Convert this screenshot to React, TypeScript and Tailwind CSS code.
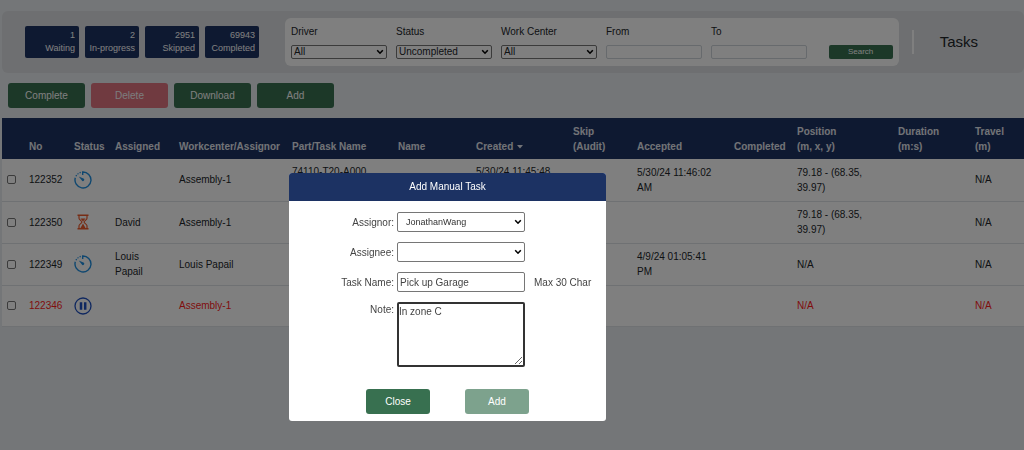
import React from "react";
import clsx from "clsx";

type Status = "running" | "waiting" | "paused";

type Task = {
  no: string;
  status: Status;
  assigned?: string;
  workcenter: string;
  part?: string;
  created?: string;
  accepted?: string;
  position: string;
  travel: string;
  late?: boolean;
};

const stats = [
  { count: 1, label: "Waiting" },
  { count: 2, label: "In-progress" },
  { count: 2951, label: "Skipped" },
  { count: 69943, label: "Completed" },
];

const tasks: Task[] = [
  {
    no: "122352",
    status: "running",
    workcenter: "Assembly-1",
    part: "74110-T20-A000",
    created: "5/30/24 11:45:48",
    accepted: "5/30/24 11:46:02 AM",
    position: "79.18 - (68.35, 39.97)",
    travel: "N/A",
  },
  {
    no: "122350",
    status: "waiting",
    assigned: "David",
    workcenter: "Assembly-1",
    position: "79.18 - (68.35, 39.97)",
    travel: "N/A",
  },
  {
    no: "122349",
    status: "running",
    assigned: "Louis Papail",
    workcenter: "Louis Papail",
    accepted: "4/9/24 01:05:41 PM",
    position: "N/A",
    travel: "N/A",
  },
  {
    no: "122346",
    status: "paused",
    workcenter: "Assembly-1",
    position: "N/A",
    travel: "N/A",
    late: true,
  },
];

const columns = [
  { title: "", width: "w-[22px]" },
  { title: "No", width: "w-[45px]" },
  { title: "Status", width: "w-[41px]" },
  { title: "Assigned", width: "w-[64px]" },
  { title: "Workcenter/Assignor", width: "w-[113px]" },
  { title: "Part/Task Name", width: "w-[106px]" },
  { title: "Name", width: "w-[78px]" },
  { title: "Created", width: "w-[97px]", sorted: true },
  { title: "Skip", unit: "(Audit)", width: "w-[64px]" },
  { title: "Accepted", width: "w-[97px]" },
  { title: "Completed", width: "w-[63px]" },
  { title: "Position", unit: "(m, x, y)", width: "w-[101px]" },
  { title: "Duration", unit: "(m:s)", width: "w-[77px]" },
  { title: "Travel", unit: "(m)", width: "w-[54px]" },
];

const StatusIcon = ({ status }: { status: Status }) => {
  if (status === "waiting") {
    return (
      <svg viewBox="0 0 18 18" className="size-[18px]" fill="none" stroke="#ee5a2a" strokeWidth="1.2">
        <path d="M3.500 2.200h11M3.500 15.800h11" strokeWidth="1.500" />
        <path d="M5 2.500v2.700c0 1.600 2.900 2.600 2.900 3.800S5 11.200 5 12.800v2.700M13 2.500v2.700c0 1.600-2.900 2.600-2.900 3.800s2.900 2.200 2.900 3.800v2.700" />
        <path d="M6.500 5.400h5L9 8.400zM9 10.400l2.500 4.600h-5z" fill="#ee5a2a" stroke="none" />
      </svg>
    );
  }
  if (status === "paused") {
    return (
      <svg viewBox="0 0 18 18" className="size-[18px]" fill="none" stroke="#1f50c0">
        <circle cx="9" cy="9" r="8" strokeWidth="1.300" />
        <path d="M7 5.200v7.600M11.200 5.200v7.600" strokeWidth="2.500" />
      </svg>
    );
  }
  return (
    <svg viewBox="0 0 18 18" className="size-[18px]" fill="none" stroke="#1f8fe0">
      <path d="M8.700 4V1a8 8 0 1 1-7.400 5.800" strokeWidth="1.400" />
      <path d="M2 5.200A8 8 0 0 1 7 1.300" strokeWidth="1.300" strokeDasharray="1.200 1.300" />
      <path d="M4.700 5.600l5.300 2.200a1.500 1.500 0 0 1-1.700 2.300z" fill="#1f8fe0" stroke="none" />
    </svg>
  );
};

type SelectProps = {
  id: string;
  options: string[];
  className?: string;
};

const Select = ({ id, options, className }: SelectProps) => (
  <div className="relative">
    <select
      id={id}
      className={clsx(
        "block w-full appearance-none rounded-[2px] border border-[#767676] bg-white pr-4",
        className,
      )}
    >
      {options.map((option) => (
        <option key={option}>{option}</option>
      ))}
    </select>
    <svg
      viewBox="0 0 8 6"
      className="pointer-events-none absolute top-1/2 right-[3px] h-[6px] w-[8px] -translate-y-1/2"
      fill="none"
      stroke="#000"
      strokeWidth="1.600"
    >
      <path d="M1.200 1.300L4 4.200l2.800-2.900" />
    </svg>
  </div>
);

const FilterField = ({ id, label, children }: { id: string; label: string; children: React.ReactNode }) => (
  <div className="flex w-24 flex-col gap-[6px]">
    <label htmlFor={id}>{label}</label>
    {children}
  </div>
);

const Header = () => (
  <header className="flex items-center rounded-md bg-[#dcdfe2] py-[7px] pr-[46px] pl-[23px]">
    <div className="flex gap-[6px] text-[9px] leading-[13px] text-white">
      {stats.map((stat) => (
        <div key={stat.label} className="w-[54px] rounded-[2px] bg-[#1c3263] py-[3px] pr-1 text-right">
          <div>{stat.count}</div>
          <div>{stat.label}</div>
        </div>
      ))}
    </div>
    <form className="ml-[26px] flex flex-1 items-end gap-[9px] rounded-md bg-white px-[6px] pt-[6px] pb-[7px]">
      <FilterField id="driver" label="Driver">
        <Select id="driver" options={["All"]} className="h-[14px] pl-[2px] leading-[12px]" />
      </FilterField>
      <FilterField id="status" label="Status">
        <Select id="status" options={["Uncompleted"]} className="h-[14px] pl-[2px] leading-[12px]" />
      </FilterField>
      <FilterField id="center" label="Work Center">
        <Select id="center" options={["All"]} className="h-[14px] pl-[2px] leading-[12px]" />
      </FilterField>
      <FilterField id="from" label="From">
        <input id="from" type="text" className="h-[14px] rounded-[2px] border border-[#ced4da] px-1" />
      </FilterField>
      <FilterField id="to" label="To">
        <input id="to" type="text" className="h-[14px] rounded-[2px] border border-[#ced4da] px-1" />
      </FilterField>
      <button type="button" className="ml-auto h-[14px] w-16 rounded-[2px] bg-[#387050] text-[8px] leading-[14px] text-white">
        Search
      </button>
    </form>
    <div className="ml-[13px] h-6 w-[2px] bg-white" />
    <h1 className="ml-[26px] text-[15px] leading-5">Tasks</h1>
  </header>
);

type ActionButtonProps = {
  children: string;
  className: string;
  disabled?: boolean;
};

const ActionButton = ({ children, className, disabled }: ActionButtonProps) => (
  <button
    type="button"
    disabled={disabled}
    className={clsx("rounded-[3px] py-[5px] text-white disabled:opacity-65", className)}
  >
    {children}
  </button>
);

const TaskTable = () => (
  <table className="w-full table-fixed border-collapse bg-white text-left">
    <thead className="bg-[#1c3263] text-[#e4e7ee]">
      <tr className="h-[41px]">
        {columns.map((column, index) => (
          <th key={index} className={clsx("px-[5px] pb-[5px] align-bottom font-bold", column.width)}>
            {column.title}
            {column.unit && <div>{column.unit}</div>}
            {column.sorted && (
              <svg viewBox="0 0 6 4" className="ml-1 inline h-1 w-[6px]" fill="currentColor">
                <path d="M0 0h6L3 3.500z" />
              </svg>
            )}
          </th>
        ))}
      </tr>
    </thead>
    <tbody>
      {tasks.map((task) => (
        <tr
          key={task.no}
          className={clsx("h-[42px] border-b border-[#dee2e6] *:px-[5px] last:h-[41px]", task.late && "text-[#ff1a1a]")}
        >
          <td>
            <input
              type="checkbox"
              aria-label={task.no}
              className="block size-[9px] appearance-none rounded-[2px] border border-[#767676] checked:bg-[#1c3263]"
            />
          </td>
          <td>{task.no}</td>
          <td>
            <StatusIcon status={task.status} />
          </td>
          <td>{task.assigned}</td>
          <td>{task.workcenter}</td>
          <td className="pt-[5px] align-top">{task.part}</td>
          <td />
          <td className="pt-[5px] align-top">{task.created}</td>
          <td />
          <td>{task.accepted}</td>
          <td />
          <td>{task.position}</td>
          <td />
          <td>{task.travel}</td>
        </tr>
      ))}
    </tbody>
  </table>
);

const AddTaskDialog = () => (
  <div className="fixed inset-0 bg-black/50">
    <div
      role="dialog"
      aria-labelledby="dialog-title"
      className="absolute top-[173px] left-[289px] w-[317px] overflow-hidden rounded-[3px] bg-white"
    >
      <h2 id="dialog-title" className="bg-[#1c3263] text-center leading-7 text-white">
        Add Manual Task
      </h2>
      <form className="pt-[11px] pb-[7px] text-[#444]">
        <div className="grid grid-cols-[105px_128px_1fr] items-center gap-x-[3px] gap-y-[10px]">
          <label htmlFor="assignor" className="text-right">
            Assignor:
          </label>
          <Select id="assignor" options={["JonathanWang"]} className="h-5 pl-2 text-[9px] text-[#333]" />
          <span />
          <label htmlFor="assignee" className="text-right">
            Assignee:
          </label>
          <Select id="assignee" options={[""]} className="h-5 pl-2 text-[9px] text-[#333]" />
          <span />
          <label htmlFor="task-name" className="text-right">
            Task Name:
          </label>
          <input
            id="task-name"
            type="text"
            defaultValue="Pick up Garage"
            className="h-5 w-full rounded-[2px] border border-[#767676] px-[2px]"
          />
          <span className="pl-[6px]">Max 30 Char</span>
          <label htmlFor="note" className="self-start text-right">
            Note:
          </label>
          <textarea
            id="note"
            defaultValue="In zone C"
            className="block h-[65px] w-full rounded-[2px] border-2 border-[#333] outline-none"
          />
        </div>
        <div className="mt-[22px] flex justify-center gap-[35px]">
          <ActionButton className="w-16 bg-[#387050]">Close</ActionButton>
          <ActionButton className="w-16 bg-[#387050]" disabled>
            Add
          </ActionButton>
        </div>
      </form>
    </div>
  </div>
);

const App = () => {
  return (
    <div className="min-h-screen bg-[#e9edf1] pt-[11px] pl-[2px] font-['Liberation_Sans',Arial,sans-serif] text-[10px] leading-[15px] text-[#212529]">
      <Header />
      <div className="my-[10px] flex gap-[6px] pl-[6px]">
        <ActionButton className="w-[77px] bg-[#387050]">Complete</ActionButton>
        <ActionButton className="w-[77px] bg-[#dc3545]" disabled>
          Delete
        </ActionButton>
        <ActionButton className="w-[77px] bg-[#387050]">Download</ActionButton>
        <ActionButton className="w-[77px] bg-[#387050]">Add</ActionButton>
      </div>
      <TaskTable />
      <AddTaskDialog />
    </div>
  );
};

export default App;
